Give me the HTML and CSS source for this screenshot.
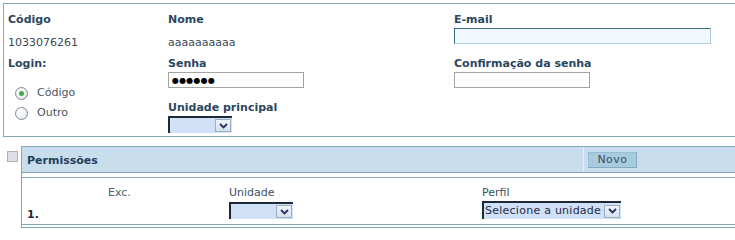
FILE: index.html
```html
<!DOCTYPE html>
<html lang="pt">
<head>
<meta charset="utf-8">
<title>Cadastro de usuário</title>
<link rel="stylesheet" href="styles.css">
</head>
<body>
<div class="page">
  <div class="user-box">
    <div class="col col-1">
      <div class="lbl">Código</div>
      <div class="val">1033076261</div>
      <div class="lbl lbl-login">Login:</div>
      <div class="radios">
        <label class="radio-row"><span class="radio checked"><span class="dot"></span></span><span class="rtext">Código</span></label>
        <label class="radio-row"><span class="radio"></span><span class="rtext">Outro</span></label>
      </div>
    </div>
    <div class="col col-2">
      <div class="lbl">Nome</div>
      <div class="val">aaaaaaaaaa</div>
      <div class="lbl lbl-login">Senha</div>
      <input class="txt txt-pass" type="text" value="●●●●●●" readonly>
      <div class="lbl lbl-unid">Unidade principal</div>
      <div class="sel sel-short"><span class="sel-text"></span><span class="arr"><svg width="9" height="6" viewBox="0 0 9 6"><path d="M1 1 L4.5 4.5 L8 1" fill="none" stroke="#23345a" stroke-width="1.8"/></svg></span></div>
    </div>
    <div class="col col-3">
      <div class="lbl">E-mail</div>
      <input class="txt txt-mail" type="text" value="">
      <div class="lbl lbl-conf">Confirmação da senha</div>
      <input class="txt txt-conf" type="password" value="">
    </div>
  </div>

  <div class="perm-area">
    <span class="chk"></span>
    <div class="perm">
      <div class="perm-head">
        <div class="perm-title">Permissões</div>
        <div class="perm-div"></div>
        <div class="btn-novo">Novo</div>
      </div>
      <div class="perm-body">
        <div class="pb-exc">Exc.</div>
        <div class="pb-unid">Unidade</div>
        <div class="pb-perf">Perfil</div>
        <div class="pb-num">1.</div>
        <div class="pb-sel1"><div class="sel sel-short"><span class="sel-text"></span><span class="arr"><svg width="9" height="6" viewBox="0 0 9 6"><path d="M1 1 L4.5 4.5 L8 1" fill="none" stroke="#23345a" stroke-width="1.8"/></svg></span></div></div>
        <div class="pb-sel2"><div class="sel sel-long"><span class="sel-text">Selecione a unidade</span><span class="arr"><svg width="9" height="6" viewBox="0 0 9 6"><path d="M1 1 L4.5 4.5 L8 1" fill="none" stroke="#23345a" stroke-width="1.8"/></svg></span></div></div>
      </div>
      <div class="perm-foot"></div>
    </div>
  </div>
</div>
</body>
</html>
```
FILE: styles.css
```css
html, body {
  margin: 0;
  padding: 0;
  overflow: hidden;
  background: #ffffff;
}
body {
  font-family: "DejaVu Sans", Verdana, sans-serif;
  font-size: 11px;
  color: #3c4a58;
}
.page {
  width: 732px;
  padding: 3px 0 0 3px;
}
.user-box {
  display: grid;
  grid-template-columns: 160px 286px 1fr;
  border-top: 1px solid #83a6b8;
  border-left: 1px solid #83a6b8;
  border-bottom: 1px solid #83a6b8;
  padding: 8px 0 3px 4px;
}
.col {
  display: flex;
  flex-direction: column;
  align-items: flex-start;
}
.lbl {
  font-weight: bold;
  color: #2b4660;
  line-height: 16px;
  height: 16px;
  white-space: nowrap;
}
.val {
  line-height: 16px;
  height: 16px;
  margin-top: 7px;
  color: #3a4856;
}
.lbl-login { margin-top: 5px; }
.lbl-unid { margin-top: 12px; }
.lbl-conf { margin-top: 12px; }
.radios {
  margin-top: 11px;
  display: flex;
  flex-direction: column;
}
.radio-row {
  display: flex;
  align-items: center;
  height: 20px;
  padding-left: 7px;
}
.radio {
  width: 13px;
  height: 13px;
  box-sizing: border-box;
  border-radius: 50%;
  border: 1px solid #7f8c98;
  background: radial-gradient(circle at 35% 35%, #ffffff 0%, #f4f4f6 45%, #d6d9de 100%);
  display: flex;
  align-items: center;
  justify-content: center;
}
.dot {
  width: 5px;
  height: 5px;
  border-radius: 50%;
  background: #3fae4a;
}
.rtext {
  margin-left: 9px;
  color: #4a5664;
  line-height: 14px;
}
.txt {
  box-sizing: border-box;
  height: 16px;
  margin: 0;
  padding: 0 3px;
  font-family: "DejaVu Sans", Verdana, sans-serif;
  font-size: 11px;
  outline: none;
}
.txt-pass {
  width: 136px;
  border: 1px solid #a4a4a4;
  background: #ffffff;
  color: #000000;
  font-size: 8px;
  letter-spacing: 0.2px;
  line-height: 14px;
}
.txt-conf {
  width: 136px;
  border: 1px solid #a4a4a4;
  background: #ffffff;
}
.txt-mail {
  width: 257px;
  border-top: 1px solid #3c6a80;
  border-left: 1px solid #3c6a80;
  border-right: 1px solid #aad0e0;
  border-bottom: 1px solid #aad0e0;
  background: #f0f8fc;
}
.sel {
  box-sizing: border-box;
  height: 17px;
  display: flex;
  align-items: center;
  justify-content: space-between;
  border-top: 2px solid #1d2838;
  border-left: 2px solid #1d2838;
  background: #cfe0f7;
}
.sel-short { width: 64px; }
.sel-long { width: 139px; height: 18px; }
.sel-text {
  padding-left: 1px;
  color: #1e2c44;
  line-height: 14px;
  white-space: nowrap;
  letter-spacing: 0.25px;
}
.arr {
  box-sizing: border-box;
  width: 16px;
  height: 13px;
  margin-right: 1px;
  border: 1px solid #9eaec0;
  background: linear-gradient(#eef3fa, #d6e1ee);
  display: flex;
  align-items: center;
  justify-content: center;
  flex: none;
}
.perm-area {
  display: flex;
  align-items: flex-start;
  margin-top: 9px;
}
.chk {
  flex: none;
  width: 11px;
  height: 11px;
  box-sizing: border-box;
  margin: 5px 3px 0 4px;
  border: 1px solid #aeb0bc;
  background: #dcdde6;
}
.perm {
  flex: 1;
  border-left: 1px solid #83a6b8;
}
.perm-head {
  display: flex;
  align-items: stretch;
  height: 25px;
  background: #c9deed;
  border-top: 1px solid #83a6b8;
  border-bottom: 1px solid #83a6b8;
}
.perm-title {
  width: 556px;
  padding-left: 5px;
  padding-top: 1px;
  font-weight: bold;
  color: #23405a;
  line-height: 25px;
}
.perm-div {
  width: 1px;
  background: #e4eef5;
}
.btn-novo {
  align-self: center;
  margin-left: 4px;
  width: 49px;
  height: 16px;
  box-sizing: border-box;
  background: #a9cbe0;
  border: 1px solid #9cbdd2;
  border-right-color: #88a9bd;
  border-bottom-color: #88a9bd;
  color: #3a4e60;
  text-align: center;
  line-height: 14px;
  letter-spacing: 0.5px;
}
.perm-body {
  margin-top: 4px;
  border-top: 1px solid #83a6b8;
  border-bottom: 1px solid #83a6b8;
  padding: 7px 0 5px 5px;
  display: grid;
  grid-template-columns: 81px 121px 253px 1fr;
  grid-template-rows: 16px 18px;
}
.perm-foot {
  height: 2px;
  border-bottom: 1px solid #83a6b8;
}
.pb-exc, .pb-unid, .pb-perf {
  grid-row: 1;
  line-height: 16px;
  color: #3a5064;
}
.pb-exc { grid-column: 2; color: #555d66; }
.pb-unid { grid-column: 3; }
.pb-perf { grid-column: 4; }
.pb-num {
  grid-row: 2;
  grid-column: 1;
  font-weight: bold;
  color: #1e2a3a;
  align-self: end;
  line-height: 14px;
  margin-bottom: -3px;
}
.pb-sel1 { grid-row: 2; grid-column: 3; align-self: end; }
.pb-sel2 { grid-row: 2; grid-column: 4; }
```
